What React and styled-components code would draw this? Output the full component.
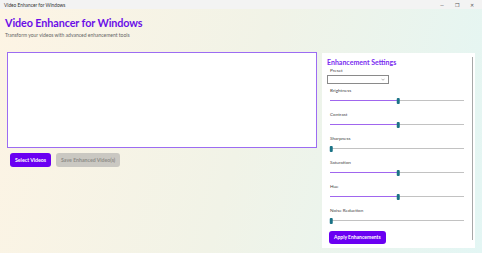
import React from 'react';
import styled, { createGlobalStyle } from 'styled-components';

const GlobalStyle = createGlobalStyle`
	html, body {
		margin: 0;
		padding: 0;
		width: 100%;
		height: 100%;
		overflow: hidden;
	}
	#root {
		height: 100%;
	}
	* {
		box-sizing: border-box;
	}
`;

const Window = styled.div`
	width: 100%;
	height: 100vh;
	display: flex;
	flex-direction: column;
	font-family: Lato, "Noto Sans", sans-serif;
`;

const TitleBar = styled.div`
	height: 9px;
	background-color: #f3f3f3;
	display: flex;
	align-items: center;
	justify-content: space-between;
	padding: 0 4px;
	font-size: 4.8px;
	color: #333;
`;

const Controls = styled.div`
	display: flex;
	align-items: center;
	gap: 9px;
	padding-right: 3px;
`;

const Control = styled.span`
	width: 6px;
	display: flex;
	justify-content: center;
	color: #555;
	font-size: 5px;
`;

const Main = styled.div`
	flex: 1;
	background: linear-gradient(105deg, #fdf4e4 0%, #f1f3e7 50%, #e3f6f4 100%);
	padding: 6px 7px 5px 5px;
	display: flex;
	flex-direction: column;
`;

const Title = styled.h1`
	margin: 0;
	font-size: 10.8px;
	font-weight: 700;
	color: #6a0ee8;
	line-height: 16px;
	letter-spacing: -0.1px;
`;

const Subtitle = styled.p`
	margin: 0;
	font-size: 5px;
	color: #666;
	line-height: 8px;
`;

const Content = styled.div`
	flex: 1;
	display: flex;
	gap: 5px;
	margin-top: 13px;
	padding-left: 2px;
`;

const LeftColumn = styled.div`
	width: 310px;
	display: flex;
	flex-direction: column;
	gap: 5px;
`;

const VideoArea = styled.div`
	height: 96px;
	background: #fff;
	border: 1.5px solid #9c6cf2;
`;

const ButtonRow = styled.div`
	display: flex;
	gap: 5px;
	padding-left: 3px;
`;

const Button = styled.button`
	height: 14px;
	padding: 0 5px;
	border: none;
	border-radius: 3px;
	font-family: Lato, "Noto Sans", sans-serif;
	font-size: 5.2px;
	font-weight: 700;
	color: ${(p) => (p.disabled ? '#8f8d88' : '#fff')};
	background: ${(p) => (p.disabled ? '#cac8c2' : '#6a00f2')};
	cursor: pointer;
`;

const Panel = styled.div`
	position: relative;
	flex: 1;
	margin-top: 1px;
	background: #fff;
	padding: 5px 5px 4px 5px;
	display: flex;
	flex-direction: column;
`;

const ScrollIndicator = styled.div`
	position: absolute;
	right: 2px;
	top: 4px;
	bottom: 8px;
	width: 1px;
	background: #a8a8a8;
`;

const PanelTitle = styled.h2`
	margin: 0;
	font-size: 7px;
	font-weight: 700;
	color: #7a2cf0;
	line-height: 9px;
`;

const Label = styled.div`
	font-size: 4.6px;
	color: #444;
	line-height: 6px;
	padding-left: 3px;
`;

const Select = styled.div`
	width: 62px;
	height: 9px;
	margin: 1.5px 0 3px;
	border: 1px solid #8a8a8a;
	display: flex;
	align-items: center;
	justify-content: flex-end;
	padding-right: 3px;
`;

const Field = styled.div`
	display: flex;
	flex-direction: column;
	height: 24px;
`;

const SliderBox = styled.div`
	position: relative;
	height: 8px;
	margin: 4px 6px 0 3px;
	display: flex;
	align-items: center;
`;

const Track = styled.div`
	width: 100%;
	height: 1px;
	background: #c2c2c2;
`;

const Fill = styled.div`
	position: absolute;
	left: 0;
	height: 1.5px;
	background: #a066ee;
`;

const Thumb = styled.div`
	position: absolute;
	width: 2.5px;
	height: 6px;
	border-radius: 1px;
	background: #1b7386;
	transform: translateX(-50%);
`;

const ApplyButton = styled(Button)`
	align-self: flex-start;
	margin-left: 2px;
	height: 13px;
	padding: 0 5px;
	font-size: 5px;
`;

const settings = [
	{ name: 'Brightness', value: 0.5 },
	{ name: 'Contrast', value: 0.5 },
	{ name: 'Sharpness', value: 0 },
	{ name: 'Saturation', value: 0.5 },
	{ name: 'Hue', value: 0.5 },
	{ name: 'Noise Reduction', value: 0 },
];

const Slider = ({ value }) => (
	<SliderBox>
		<Track />
		<Fill style={{ width: `${value * 100}%` }} />
		<Thumb style={{ left: `calc(${value * 100}% + 1px)` }} />
	</SliderBox>
);

const Chevron = () => (
	<svg width="4" height="3" viewBox="0 0 8 5">
		<path d="M1 1 L4 4 L7 1" fill="none" stroke="#666" strokeWidth="1" />
	</svg>
);

const App = () => {
	return (
		<Window>
			<GlobalStyle />
			<TitleBar>
				<span>Video Enhancer for Windows</span>
				<Controls>
					<Control>—</Control>
					<Control>❐</Control>
					<Control>✕</Control>
				</Controls>
			</TitleBar>
			<Main>
				<Title>Video Enhancer for Windows</Title>
				<Subtitle>Transform your videos with advanced enhancement tools</Subtitle>
				<Content>
					<LeftColumn>
						<VideoArea />
						<ButtonRow>
							<Button>Select Videos</Button>
							<Button disabled>Save Enhanced Video(s)</Button>
						</ButtonRow>
					</LeftColumn>
					<Panel>
						<ScrollIndicator />
						<PanelTitle>Enhancement Settings</PanelTitle>
						<Label>Preset</Label>
						<Select>
							<Chevron />
						</Select>
						{settings.map((s) => (
							<Field key={s.name}>
								<Label>{s.name}</Label>
								<Slider value={s.value} />
							</Field>
						))}
						<ApplyButton>Apply Enhancements</ApplyButton>
					</Panel>
				</Content>
			</Main>
		</Window>
	);
};

export default App;
